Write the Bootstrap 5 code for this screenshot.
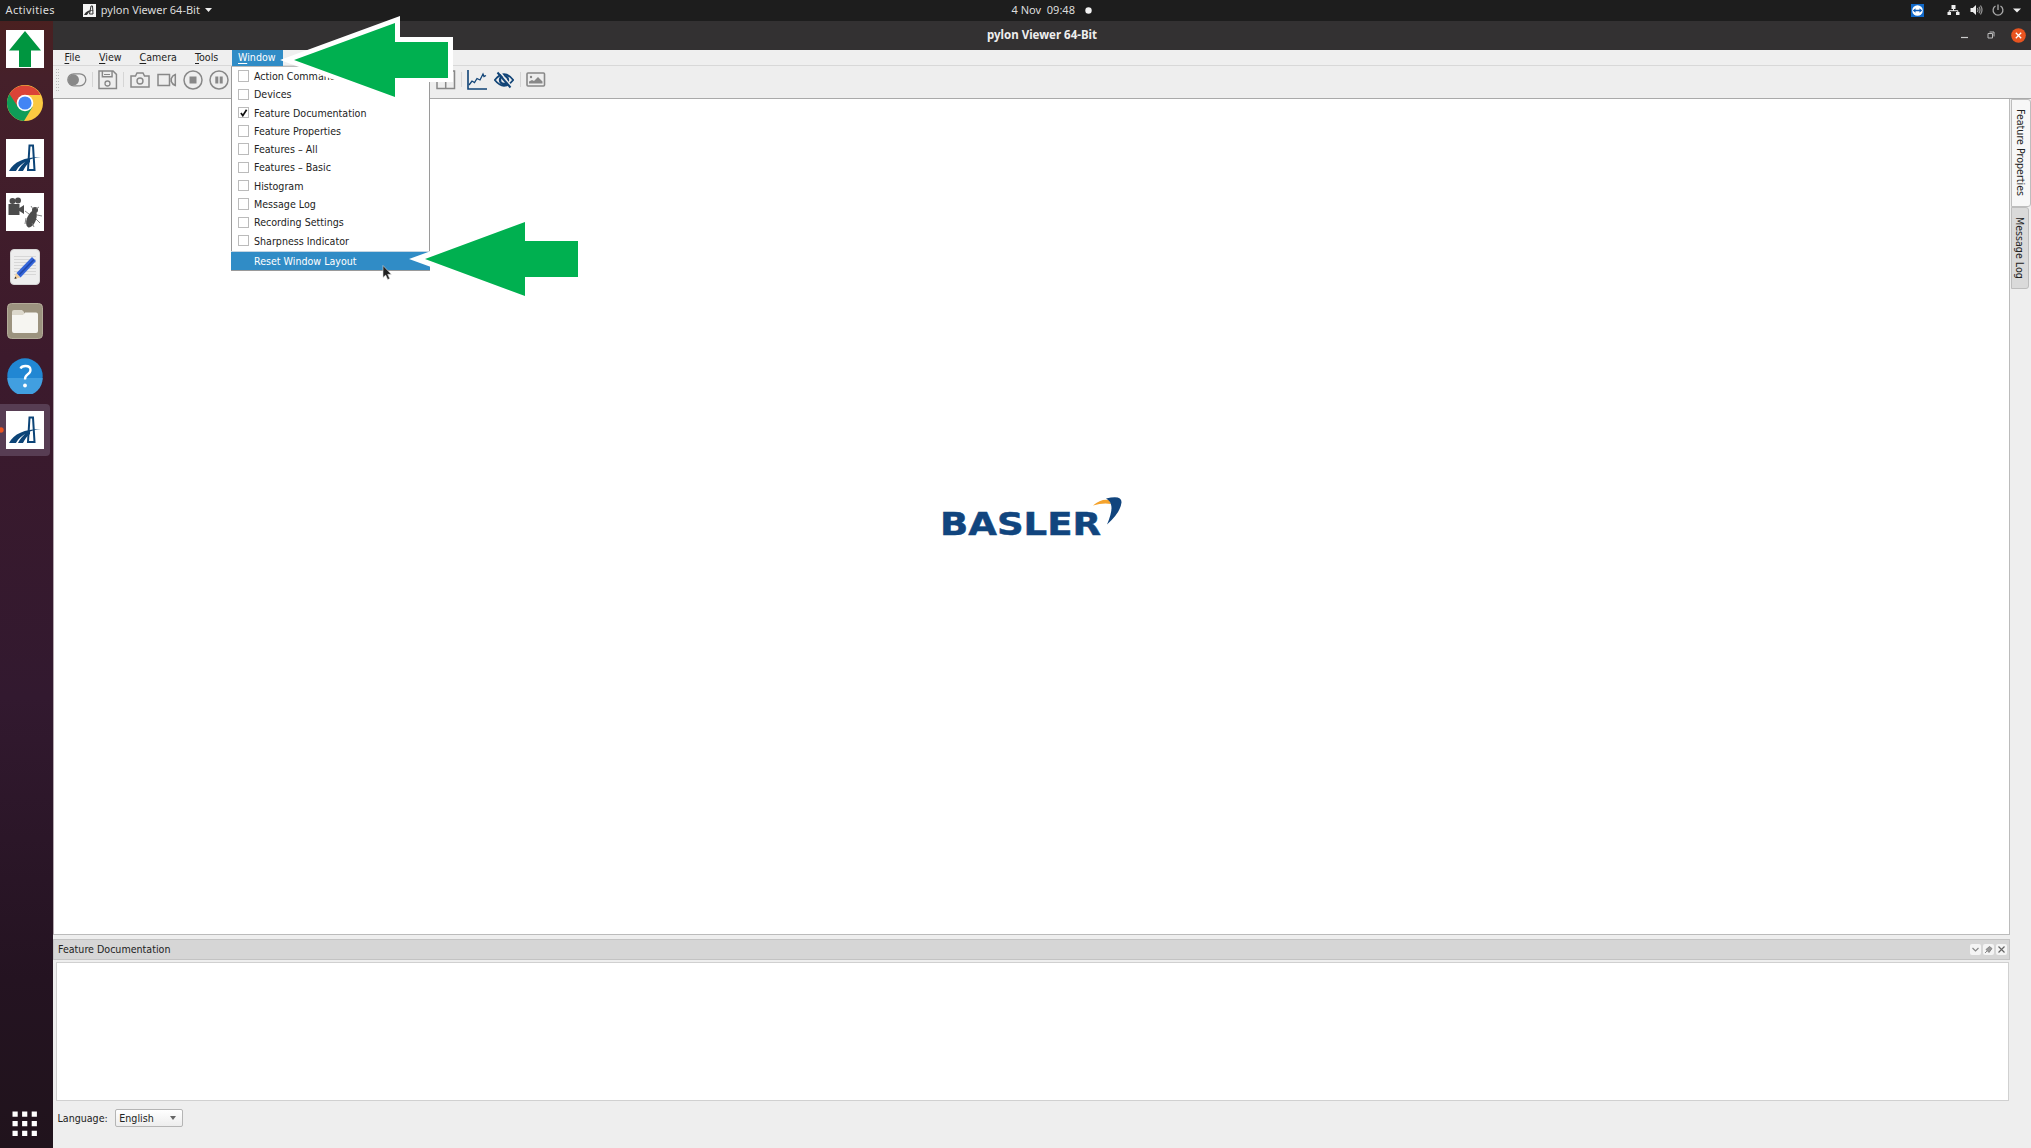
<!DOCTYPE html>
<html lang="en">
<head>
<meta charset="utf-8">
<title>pylon Viewer 64-Bit</title>
<link href="https://cdn.jsdelivr.net/npm/bootstrap@5.3.0/dist/css/bootstrap.min.css" rel="stylesheet">
<style>
html,body{height:100%;overflow:hidden}
body{font:10.6px/16px "DejaVu Sans Condensed","DejaVu Sans",sans-serif;font-stretch:condensed;color:#222;background:#eee}
svg{display:block;flex:none}
.topbar{height:20.5px;background:#1d1d1d;color:#dcdcdc;font-family:"Noto Sans",sans-serif;font-size:11px;font-stretch:normal}
.topbar .cell{flex:1 1 0}
.launcher{width:53px;background:linear-gradient(#4a2020 0,#45202a 5%,#3c1a2c 30%,#32192f 60%,#241321 85%,#20131c);padding-top:1.3px}
.launcher .slot{height:54.45px;width:49px;position:relative}
.launcher .active-slot{background:#573d53;border-radius:0 4px 4px 0;height:51.5px;margin-top:1.5px;width:50px;padding-right:1px}
.titlebar{height:29.5px;background:#333132;color:#eee;font-family:"Noto Sans",sans-serif;font-weight:700;font-size:11.5px;font-stretch:normal}
.menubar{height:16px;border-bottom:1px solid #d8d8d8;background:#efefef;padding-left:5px}
.menubar span{padding-left:6.500px;line-height:15px;height:15.5px}
.menubar .open{background:#308cc6;color:#fff;width:51px}
u{text-underline-offset:2px}
.tools{height:32.5px;border-bottom:1px solid #a9a9a9;background:#eee;padding-left:3px;padding-bottom:4px}
.tools .rule{width:1px;height:15px;background:#d5d5d5}
.viewport{background:#fff;border-left:1.5px solid #b3aab0;border-right:1.5px solid #bbb;border-bottom:1.5px solid #bbb;height:836px;width:1957px}
.sidebar{width:21px;padding-left:1px}
.vtab{writing-mode:vertical-rl;background:#dadada;border:1px solid #bdbdbd;border-radius:0 3px 3px 0;width:18px;height:82px;padding-top:9px;line-height:16px}
.vtab.sel{background:#f7f7f7;width:20px;height:108px;line-height:18px}
.docktitle{height:21px;width:1957px;margin-top:4px;background:#d6d6d6;border:1px solid #c3c3c3;padding:0 2px 0 4px}
.tb{width:11px;height:11px;background:#f4f4f4;border-radius:2px}
.doc{height:139.5px;width:1953px;margin:2px 0 0 3px;background:#fff;border:1.5px solid #d0d0d0}
.lang{height:34px;padding-left:4.5px;gap:7.5px}
.combo{width:68px;height:18.5px;border:1px solid #b5b5b5;border-radius:2px;background:linear-gradient(#fff,#ededed);padding:0 6px 0 3px}
.winmenu{position:absolute;left:231px;top:66px;width:199px;height:204.5px;background:#fff;border:1px solid #9a9a9a;border-top-color:#bbb;z-index:3}
.winmenu .entry{height:18.38px;padding-left:5.5px;gap:5px}
.box{width:11.5px;height:11.5px;border:1px solid #bbb;background:#fff;flex:none}
.winmenu .hot{height:18px;background:#308cc6;color:#fff;margin:2px -1px 0 -1px;padding-left:23px;box-shadow:0 -1px #c5d5e2}
.overlay{position:absolute;left:0;top:0;z-index:5;pointer-events:none}
</style>
<script src="https://cdn.jsdelivr.net/npm/bootstrap@5.3.0/dist/js/bootstrap.bundle.min.js"></script>
</head>
<body class="d-flex flex-column">
<svg width="0" height="0" class="position-absolute"><defs>
<symbol id="pylon" viewBox="0 0 38 38"><rect width="38" height="38" fill="#fff"/><path d="M22 31 23.500 6.500H27L28.500 31z" fill="none" stroke="#0c4477" stroke-width="2"/><path d="M3 32C8 23 18 18 35 18 25 19 15 23 10 32zM12 32c3-6 7-9.500 12-12v3c-3 2-5 5-7 9z" fill="#0c4477"/></symbol>
</defs></svg>

<header class="topbar d-flex align-items-center">
  <div class="cell d-flex align-items-center" style="padding-left:5.5px"><span style="letter-spacing:.35px">Activities</span>
    <svg width="13" height="13" viewBox="0 0 13 13" style="margin-left:28px"><rect width="13" height="13" fill="#f5f5f5"/><path d="M6.500 10 8 2h1.500l.5 8z" fill="none" stroke="#333"/><path d="M1 11c2-4 5-5 10-5-4 1-5 2-7 5z" fill="#333"/></svg>
    <span style="margin-left:5px">pylon Viewer 64-Bit</span>
    <svg width="7" height="5" viewBox="0 0 7 5" style="margin-left:5px"><path d="M0 0h7L3.500 4z" fill="#eee"/></svg></div>
  <div class="d-flex align-items-center" style="margin-right:-77px"><span>4 Nov&nbsp; 09:48</span><svg width="7" height="7" viewBox="0 0 7 7" style="margin-left:10px"><circle cx="3.500" cy="3.500" r="3.200" fill="#f2f2f2"/></svg></div>
  <div class="cell d-flex align-items-center justify-content-end" style="padding-right:10px">
    <svg width="13" height="13" viewBox="0 0 13 13"><rect width="13" height="13" fill="#1169c9"/><circle cx="6.500" cy="6.500" r="5.300" fill="#fff"/><path d="M1.800 6.500 4.500 4.300v1.500h4V4.300l2.700 2.200-2.700 2.200V7.200h-4v1.500z" fill="#0e5cb8"/></svg>
    <svg width="13" height="12" viewBox="0 0 13 12" style="margin-left:23px"><path d="M4.500 1h4v4h-4zM.5 8h3.500v3H.500zM9 8h3.500v3H9z" fill="#eee"/><path d="M6.500 5v2M2.200 8V6.700h8.600V8" fill="none" stroke="#eee"/></svg>
    <svg width="13" height="12" viewBox="0 0 13 12" style="margin-left:10px"><path d="M.5 4h2.300L6 1v10L2.800 8H.500z" fill="#eee"/><path d="M7.300 4q1.300 2 0 4M9 2.800q2 3.200 0 6.400M10.500 1.500q3 4.500 0 9" fill="none" stroke="#999" stroke-width="1.200"/></svg>
    <svg width="12" height="12" viewBox="0 0 12 12" style="margin-left:9px"><path d="M3.500 2a4.900 4.900 0 1 0 5 0M6 .5V6" fill="none" stroke="#aaa" stroke-width="1.300"/></svg>
    <svg width="8" height="5" viewBox="0 0 8 5" style="margin-left:9px"><path d="M0 .5h8L4 4.500z" fill="#eee"/></svg>
  </div>
</header>

<div class="d-flex flex-grow-1">
  <nav class="launcher d-flex flex-column">
    <div class="slot d-flex align-items-center justify-content-center"><svg width="38" height="38" viewBox="0 0 38 38"><rect width="38" height="38" fill="#fff"/><path d="M19 1 35 20.500H25V37H13V20.500H3z" fill="#009640"/></svg></div>
    <div class="slot d-flex align-items-center justify-content-center"><svg width="36" height="36" viewBox="0 0 36 36"><circle cx="18" cy="18" r="18" fill="#fbc941"/><path d="M18 18 2.400 9A18 18 0 0 0 17 36l8.500-14z" fill="#0f9d58"/><path d="M2.400 9A18 18 0 0 1 33.600 10H18l-7 12z" fill="#db4437"/><circle cx="18" cy="18" r="8.300" fill="#fff"/><circle cx="18" cy="18" r="6.600" fill="#4285f4"/></svg></div>
    <div class="slot d-flex align-items-center justify-content-center"><svg width="38" height="38"><use href="#pylon"/></svg></div>
    <div class="slot d-flex align-items-center justify-content-center"><svg width="38" height="38" viewBox="0 0 38 38"><rect width="38" height="38" fill="#fff"/><g fill="#4c4c4c"><circle cx="6.500" cy="8" r="3"/><circle cx="12" cy="7.500" r="3"/><path d="M2.500 11h11v11h-11zM13.500 15l4.500-3v9l-4.500-3z"/><ellipse cx="25.500" cy="26" rx="4.500" ry="9" transform="rotate(22 25.500 26)"/><circle cx="29" cy="17" r="3"/></g><path d="M27 16l-2-3M30 16l3-2M23 21l-4-3M31 22l5 1M30 26l4 4M20 25l-1 6M26 30l2 4" fill="none" stroke="#777" stroke-width=".9"/></svg></div>
    <div class="slot d-flex align-items-center justify-content-center"><svg width="30" height="36" viewBox="0 0 30 36"><rect x=".5" y=".5" width="29" height="35" rx="3.500" fill="#eee" stroke="#d5d5d5"/><path d="M4 7.500h22M4 10.500h22M4 13.500h22M4 16.500h22M4 19.500h22M4 22.500h22M4 25.500h22" stroke="#d0d0d0" stroke-width=".8"/><path d="M4.500 30 6 24l4.500 4.500z" fill="#f1cf9c"/><path d="M4.500 30l.7-2.500 1.700 1.700z" fill="#333"/><path d="M6.500 24 22 8l4 4-15.500 16.500z" fill="#3465d9"/><path d="M9 26 24 10.500" stroke="#2148ab" stroke-width="1.500"/></svg></div>
    <div class="slot d-flex align-items-center justify-content-center"><svg width="36" height="36" viewBox="0 0 36 36"><rect x=".5" y=".5" width="35" height="35" rx="4" fill="#9c937f" stroke="#b3ab99"/><path d="M5 9q0-2 2-2h8l2 2v4H5z" fill="#dcd8cc"/><path d="M5 12h11l2-2.500h11q2 0 2 2V28q0 2-2 2H7q-2 0-2-2z" fill="#f6f5f1"/></svg></div>
    <div class="slot d-flex align-items-center justify-content-center"><svg width="36" height="36" viewBox="0 0 36 36"><circle cx="18" cy="18" r="17.700" fill="#2187d3"/><path d="M.3 20h35.400A17.700 17.700 0 0 1 .3 20z" fill="#419fe0"/><path d="M13.500 10.500q1-2.500 5-2.500 5 0 5 4 0 2.500-3 4.500-2.500 1.700-2.500 5" fill="none" stroke="#fff" stroke-width="2.300"/><circle cx="18" cy="27.500" r="1.900" fill="#fff"/></svg></div>
    <div class="slot active-slot d-flex align-items-center justify-content-center"><svg width="4" height="6" viewBox="0 0 4 6" class="position-absolute start-0"><circle cx="1" cy="3" r="2.700" fill="#e95420"/></svg><svg width="38" height="38"><use href="#pylon"/></svg></div>
    <div class="mt-auto" style="padding:0 0 11.500px 12px"><svg width="26" height="26" viewBox="0 0 26 26"><path d="M3.100.5v25M12.700.5v25M22.300.5v25" stroke="#fff" stroke-width="5.200" stroke-dasharray="5.200 4.400"/></svg></div>
  </nav>

  <main class="flex-grow-1 d-flex flex-column">
    <div class="titlebar d-flex align-items-center">
      <div style="flex:1"></div><span style="margin-right:-5px">pylon Viewer 64-Bit</span>
      <div class="d-flex align-items-center justify-content-end" style="flex:1;padding-right:5px">
        <svg width="7" height="8" viewBox="0 0 7 8"><path d="M0 6.500h7" stroke="#ccc" stroke-width="1.200"/></svg>
        <svg width="8" height="8" viewBox="0 0 8 8" style="margin-left:19.500px"><path d="M1 2.500h4.500V7H1zM2.500 1H7v4.500" fill="none" stroke="#bbb" stroke-width="1"/></svg>
        <svg width="15" height="15" viewBox="0 0 15 15" style="margin-left:16px"><circle cx="7.500" cy="7.500" r="7.300" fill="#e95420"/><path d="M4.800 4.800l5.400 5.400M10.200 4.800l-5.400 5.400" stroke="#fff" stroke-width="1.300"/></svg>
      </div>
    </div>
    <div class="menubar d-flex">
      <span style="width:34.500px"><u>F</u>ile</span><span style="width:40.500px"><u>V</u>iew</span><span style="width:55.500px"><u>C</u>amera</span><span style="width:43px"><u>T</u>ools</span><span class="open"><u>W</u>indow</span>
    </div>
    <div class="tools d-flex align-items-center">
      <svg width="3" height="22" viewBox="0 0 3 22"><path d="M.5 0v22M2.500 0v22" stroke="#bbb" stroke-dasharray="1 2"/></svg>
      <svg width="20" height="14" viewBox="0 0 20 14" style="margin-left:8px"><rect x=".8" y=".8" width="18" height="12" rx="6" fill="none" stroke="#888" stroke-width="1.300"/><circle cx="6.500" cy="6.800" r="5.500" fill="#888"/></svg>
      <i class="rule" style="margin-left:5px"></i>
      <svg width="20" height="20" viewBox="0 0 20 20" style="margin-left:5px"><path d="M1 1h14.500L19 4.500V19H1zM4.500 1v6h10V1" transform="scale(.97)" fill="none" stroke="#888" stroke-width="1.500"/><path d="M6 4.500h6" stroke="#888"/><circle cx="9.500" cy="13.500" r="2.500" fill="none" stroke="#888" stroke-width="1.300"/></svg>
      <i class="rule" style="margin-left:5px"></i>
      <svg width="20" height="16" viewBox="0 0 20 16" style="margin-left:5.500px"><path d="M1 4h4.500l1.500-3h6l1.500 3H19v11H1z" fill="none" stroke="#888" stroke-width="1.500"/><circle cx="10" cy="9" r="3" fill="none" stroke="#888" stroke-width="1.400"/></svg>
      <svg width="20" height="14" viewBox="0 0 20 14" style="margin-left:7px"><path d="M1 1.500h11.500v11H1zM18.300 1.500v11q-3-1-4-4v-3q1-3 4-4z" fill="none" stroke="#888" stroke-width="1.500"/></svg>
      <svg width="20" height="20" viewBox="0 0 20 20" style="margin-left:6px"><circle cx="10" cy="10" r="9" fill="none" stroke="#888" stroke-width="1.500"/><path d="M6.500 6.500h7v7h-7z" fill="#888"/></svg>
      <svg width="20" height="20" viewBox="0 0 20 20" style="margin-left:6px"><circle cx="10" cy="10" r="9" fill="none" stroke="#888" stroke-width="1.500"/><path d="M6.300 6.500h3v7h-3zM10.700 6.500h3v7h-3z" fill="#888"/></svg>
      <svg width="20" height="20" viewBox="0 0 20 20" style="margin-left:207px"><path d="M1 1h17.500v17.500H1zM9.700 1v17.500" fill="none" stroke="#888" stroke-width="1.500"/></svg>
      <i class="rule" style="margin-left:5px"></i>
      <svg width="20" height="20" viewBox="0 0 20 20" style="margin-left:5px"><path d="M1 0v19h19" fill="none" stroke="#114477" stroke-width="1.600"/><path d="M2 15 5 11l2.500 1.500L10 8.500l3 1.500 3-6 1 2.500 2-1" fill="none" stroke="#114477" stroke-width="1.300"/></svg>
      <svg width="20" height="18" viewBox="0 0 20 18" style="margin-left:7px"><path d="M.8 9Q10-2.500 19.200 9 10 20.500.8 9z" fill="none" stroke="#114477" stroke-width="1.800"/><circle cx="10" cy="9" r="4" fill="none" stroke="#114477" stroke-width="2.400"/><path d="M5.500.5l13 16" stroke="#eee" stroke-width="1.600"/><path d="M3.500 1.500l13 15" stroke="#114477" stroke-width="2"/></svg>
      <i class="rule" style="margin-left:6.500px"></i>
      <svg width="20" height="15" viewBox="0 0 20 15" style="margin-left:4.500px"><rect x="1" y="1" width="17.500" height="13" rx="1" fill="none" stroke="#888" stroke-width="1.600"/><path d="M3 11.500v-2l3-1.500 2 1 4-4 4.500 4.500v2z" fill="#888"/><circle cx="5" cy="5" r="1.200" fill="#888"/></svg>
    </div>
    <div class="d-flex">
      <div class="viewport d-flex justify-content-center">
        <svg width="230" height="60" viewBox="918 485 230 60" style="margin-top:386.500px"><text x="941" y="534.700" font-family="DejaVu Sans" font-stretch="normal" font-weight="700" font-size="32" textLength="161" lengthAdjust="spacingAndGlyphs" fill="#11457e" stroke="#11457e" stroke-width=".5">BASLER</text><path d="M1094 505.500q8-7 16-5.500l2 4q-8-1.500-18 1.500z" fill="#f5a32c"/><path d="M1107 498.500q16-4 15.500 4-1 10-14.500 22 6-14 4-20-1-4-5-6z" fill="#11457e"/></svg>
      </div>
      <div class="sidebar"><div class="vtab sel">Feature Properties</div><div class="vtab">Message Log</div></div>
    </div>
    <div class="docktitle d-flex align-items-center"><span>Feature Documentation</span>
      <div class="d-flex ms-auto" style="gap:2px">
        <svg class="tb" viewBox="0 0 11 11"><path d="M2.500 4l3 3 3-3" fill="none" stroke="#888" stroke-width="1.200"/></svg>
        <svg class="tb" viewBox="0 0 11 11"><path d="M2 9l2-2" stroke="#888"/><path d="M3 5.500l3.500-3 2.500 2-3 4z" fill="#999" stroke="#777" stroke-width=".8"/></svg>
        <svg class="tb" viewBox="0 0 11 11"><path d="M2.500 2.500l6 6M8.500 2.500l-6 6" stroke="#666" stroke-width="1.200"/></svg>
      </div></div>
    <div class="doc"></div>
    <div class="lang d-flex align-items-center"><span>Language:</span><div class="combo d-flex align-items-center justify-content-between"><span>English</span><svg width="6" height="4" viewBox="0 0 6 4"><path d="M0 0h6L3 4z" fill="#666"/></svg></div></div>
  </main>
</div>

<div class="winmenu d-flex flex-column">
  <div class="entry d-flex align-items-center"><i class="box"></i><span>Action Commands</span></div>
  <div class="entry d-flex align-items-center"><i class="box"></i><span>Devices</span></div>
  <div class="entry d-flex align-items-center"><svg class="box" viewBox="0 0 10 10"><path d="M2 5.200 4 8 8 1.800" fill="none" stroke="#111" stroke-width="1.800"/></svg><span>Feature Documentation</span></div>
  <div class="entry d-flex align-items-center"><i class="box"></i><span>Feature Properties</span></div>
  <div class="entry d-flex align-items-center"><i class="box"></i><span>Features – All</span></div>
  <div class="entry d-flex align-items-center"><i class="box"></i><span>Features – Basic</span></div>
  <div class="entry d-flex align-items-center"><i class="box"></i><span>Histogram</span></div>
  <div class="entry d-flex align-items-center"><i class="box"></i><span>Message Log</span></div>
  <div class="entry d-flex align-items-center"><i class="box"></i><span>Recording Settings</span></div>
  <div class="entry d-flex align-items-center"><i class="box"></i><span>Sharpness Indicator</span></div>
  <div class="hot d-flex align-items-center">Reset Window Layout</div>
</div>

<svg class="overlay" width="620" height="320" viewBox="0 0 620 320">
  <path d="M280 60 400 16v21h53v45h-53v22z" fill="#fff"/><path d="M294 60 395 23v19h53v36h-53v19z" fill="#00b050"/>
  <path d="M409 259 530 215v21h53v46h-53v21z" fill="#fff"/><path d="M425 259 525 222v19h53v36h-53v19z" fill="#00b050"/>
  <path d="M383 265.500v12l2.700-2.400 2 4.400 2-.9-2-4.300h3.600z" fill="#222" stroke="#ddd" stroke-width=".6"/>
</svg>
</body>
</html>
